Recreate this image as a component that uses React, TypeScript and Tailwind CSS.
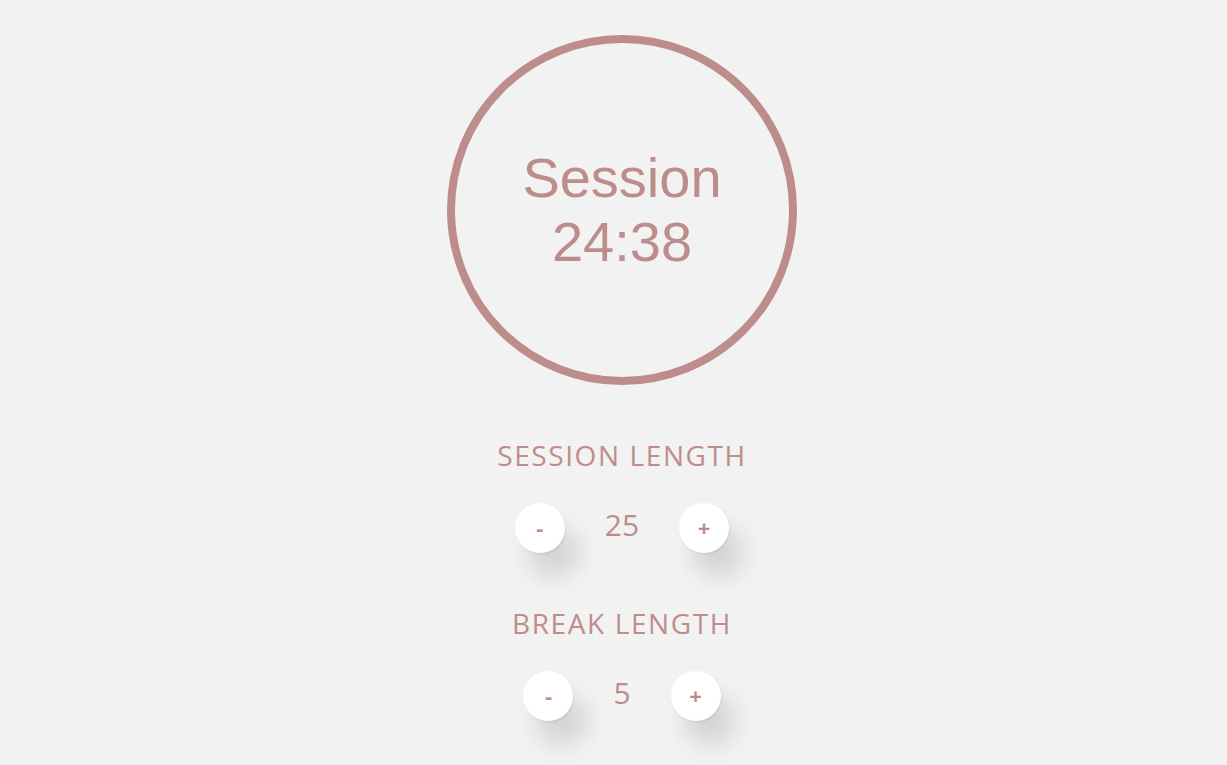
const rose = "text-[#bd8d8c]";

function Stepper({ label, value }: { label: string; value: number }) {
  return (
    <div className="flex flex-col items-center">
      <p className={`font-['Open_Sans',sans-serif] text-[28px] font-normal leading-[36px] tracking-[1.6px] ${rose}`}>{label}</p>
      <div className="mt-[30px] flex h-[50px] items-center">
        <button className={`h-[50px] w-[50px] rounded-full bg-white pb-[2px] font-['Open_Sans',sans-serif] text-[22px] font-bold ${rose} shadow-[1px_2px_2px_rgba(0,0,0,0.06),14px_24px_24px_rgba(0,0,0,0.13)]`}>
          -
        </button>
        <span className={`mx-10 self-start font-['Open_Sans',sans-serif] text-[30px] font-medium leading-[44px] ${rose}`}>{value}</span>
        <button className={`h-[50px] w-[50px] rounded-full bg-white pb-[2px] font-['Open_Sans',sans-serif] text-[22px] font-bold ${rose} shadow-[1px_2px_2px_rgba(0,0,0,0.06),14px_24px_24px_rgba(0,0,0,0.13)]`}>
          +
        </button>
      </div>
    </div>
  );
}

export default function App() {
  return (
    <div className="min-h-[765px] w-full bg-[#f2f2f2] pl-[17px] flex flex-col items-center">
      <div className="mt-[35px] flex h-[350px] w-[350px] flex-col items-center justify-center rounded-full border-8 border-[#bd8d8c]">
        <p className={`font-['Liberation_Sans',Arial,sans-serif] text-[56px] leading-[64.4px] ${rose}`}>Session</p>
        <p className={`font-['Liberation_Sans',Arial,sans-serif] text-[56px] leading-[64.4px] ${rose}`}>24:38</p>
      </div>
      <div className="mt-[52px]">
        <Stepper label="SESSION LENGTH" value={25} />
      </div>
      <div className="mt-[52px]">
        <Stepper label="BREAK LENGTH" value={5} />
      </div>
    </div>
  );
}
